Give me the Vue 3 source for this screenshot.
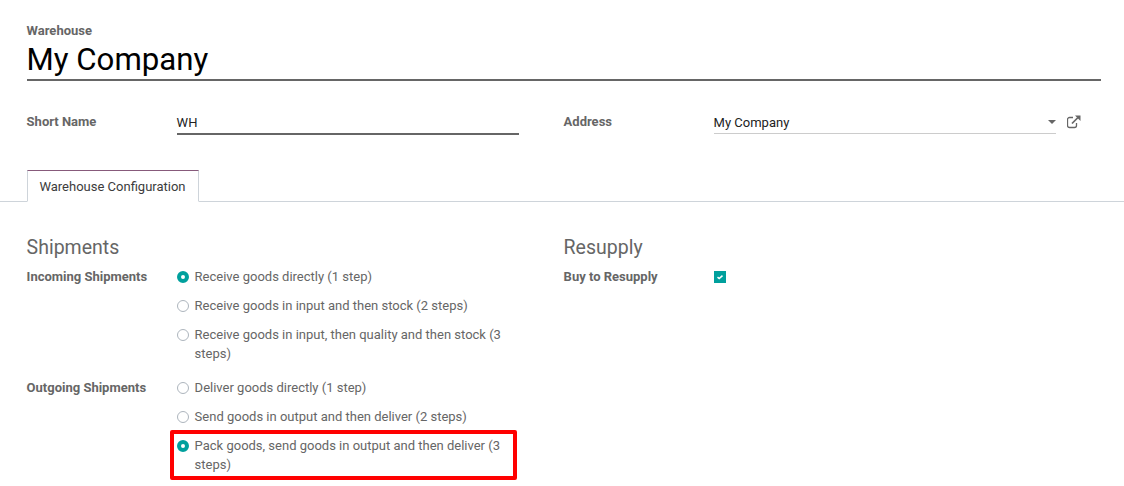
<script setup>
const incoming = [
  { text: 'Receive goods directly (1 step)', on: true },
  { text: 'Receive goods in input and then stock (2 steps)', on: false },
  { text: 'Receive goods in input, then quality and then stock (3 steps)', on: false },
]
const outgoing = [
  { text: 'Deliver goods directly (1 step)', on: false },
  { text: 'Send goods in output and then deliver (2 steps)', on: false },
  { text: 'Pack goods, send goods in output and then deliver (3 steps)', on: true, marked: true },
]
const groups = [
  { label: 'Incoming Shipments', options: incoming },
  { label: 'Outgoing Shipments', options: outgoing },
]
</script>

<template>
  <div class="page">
    <div class="head">
      <div class="cap">Warehouse</div>
      <div class="title">My Company</div>
    </div>

    <div class="cols top">
      <div class="col row">
        <div class="lab">Short Name</div>
        <div class="input strong">WH</div>
      </div>
      <div class="col row">
        <div class="lab">Address</div>
        <div class="input select">
          <span>My Company</span>
          <i class="caret"></i>
        </div>
        <svg class="ext" width="14" height="14" viewBox="0 0 14 14" fill="none">
          <path d="M9.500 8v2.500a2 2 0 0 1-2 2H2.500a2 2 0 0 1-2-2v-6a2 2 0 0 1 2-2H6" stroke="#666" stroke-width="1.300"/>
          <path d="M5 8.500 11 2.500" stroke="#666" stroke-width="1.700"/>
          <path d="M8 .5h5.500V6z" fill="#666"/>
        </svg>
      </div>
    </div>

    <div class="tabs">
      <div class="tab">Warehouse Configuration</div>
    </div>

    <div class="cols body">
      <div class="col">
        <h2>Shipments</h2>
        <div v-for="g in groups" :key="g.label" class="row group">
          <div class="lab">{{ g.label }}</div>
          <div class="opts">
            <div v-for="o in g.options" :key="o.text" class="opt" :class="{ marked: o.marked }">
              <i class="radio" :class="{ on: o.on }"></i>
              <span>{{ o.text }}</span>
              <div v-if="o.marked" class="mark"></div>
            </div>
          </div>
        </div>
      </div>
      <div class="col">
        <h2>Resupply</h2>
        <div class="row group">
          <div class="lab">Buy to Resupply</div>
          <div class="check">
            <svg width="12" height="12" viewBox="0 0 12 12" fill="none">
              <path d="M3.500 6.200 5.200 7.600 8.500 4.600" stroke="#fff" stroke-width="1.500"/>
            </svg>
          </div>
        </div>
      </div>
    </div>
  </div>
</template>

<style>
html, body { margin: 0; background: #fff; }
</style>

<style scoped>
.page {
  width: 1124px;
  height: 486px;
  overflow: hidden;
  font-family: Roboto, "Liberation Sans", sans-serif;
  font-size: 13px;
  line-height: 19px;
  color: #666;
  box-sizing: border-box;
  padding-top: 21px;
}
.head { margin: 0 23px 0 26.6px; }
.cap { font-weight: 700; height: 19px; }
.title {
  font-size: 31.2px;
  line-height: 40px;
  color: #000;
  height: 39px;
  border-bottom: 2px solid #666;
}
.cols { display: flex; padding-left: 26.6px; }
.col { width: 492px; margin-right: 45px; }
.col:last-child { margin-right: 0; width: 517px; }
.top { margin-top: 30px; }
.top .lab { padding-top: 1px; }
.row { display: flex; align-items: flex-start; }
.lab { width: 150px; flex: none; font-weight: 700; }
.input {
  flex: none;
  width: 342px;
  height: 22px;
  color: #222;
  line-height: 23px;
  border-bottom: 2px solid #666;
  box-sizing: content-box;
}
.select {
  display: flex;
  justify-content: space-between;
  align-items: center;
  border-bottom: 1px solid #ccc;
  height: 22px;
}
.caret {
  width: 0;
  height: 0;
  border: 4px solid transparent;
  border-top-color: #666;
  border-bottom: 0;
}
.ext { flex: none; margin: 4px 0 0 11px; }
.tabs {
  margin-top: 35px;
  height: 31px;
  border-bottom: 1px solid #ced4da;
  padding-left: 27px;
}
.tab {
  width: 172px;
  height: 32px;
  box-sizing: border-box;
  border: 1px solid #ced4da;
  border-top-color: #875a7b;
  border-bottom-color: #fff;
  background: #fff;
  padding-right: 1px;
  text-align: center;
  color: #3c3c3c;
  line-height: 31px;
}
.body { margin-top: 32px; }
h2 {
  margin: 0 0 5px;
  font-size: 19.5px;
  font-weight: 400;
  line-height: 28px;
  color: #666;
}
.group { margin-bottom: 5px; }
.opts { flex: 1; min-width: 0; }
.opt {
  position: relative;
  display: flex;
  gap: 6px;
  padding-bottom: 10px;
  width: 330px;
}
.radio {
  flex: none;
  width: 12px;
  height: 12px;
  margin-top: 4px;
  border-radius: 50%;
  border: 1px solid #adb5bd;
  box-sizing: border-box;
  background: #fff;
}
.radio.on {
  border: 4px solid #00a09d;
}
.mark {
  position: absolute;
  left: -7px;
  top: -6px;
  width: 347px;
  height: 50px;
  border: 4px solid #f00;
  box-sizing: border-box;
  border-radius: 2px;
  pointer-events: none;
}
.check {
  width: 12px;
  height: 12px;
  margin-top: 4px;
  background: #00a09d;
  display: flex;
}
</style>
